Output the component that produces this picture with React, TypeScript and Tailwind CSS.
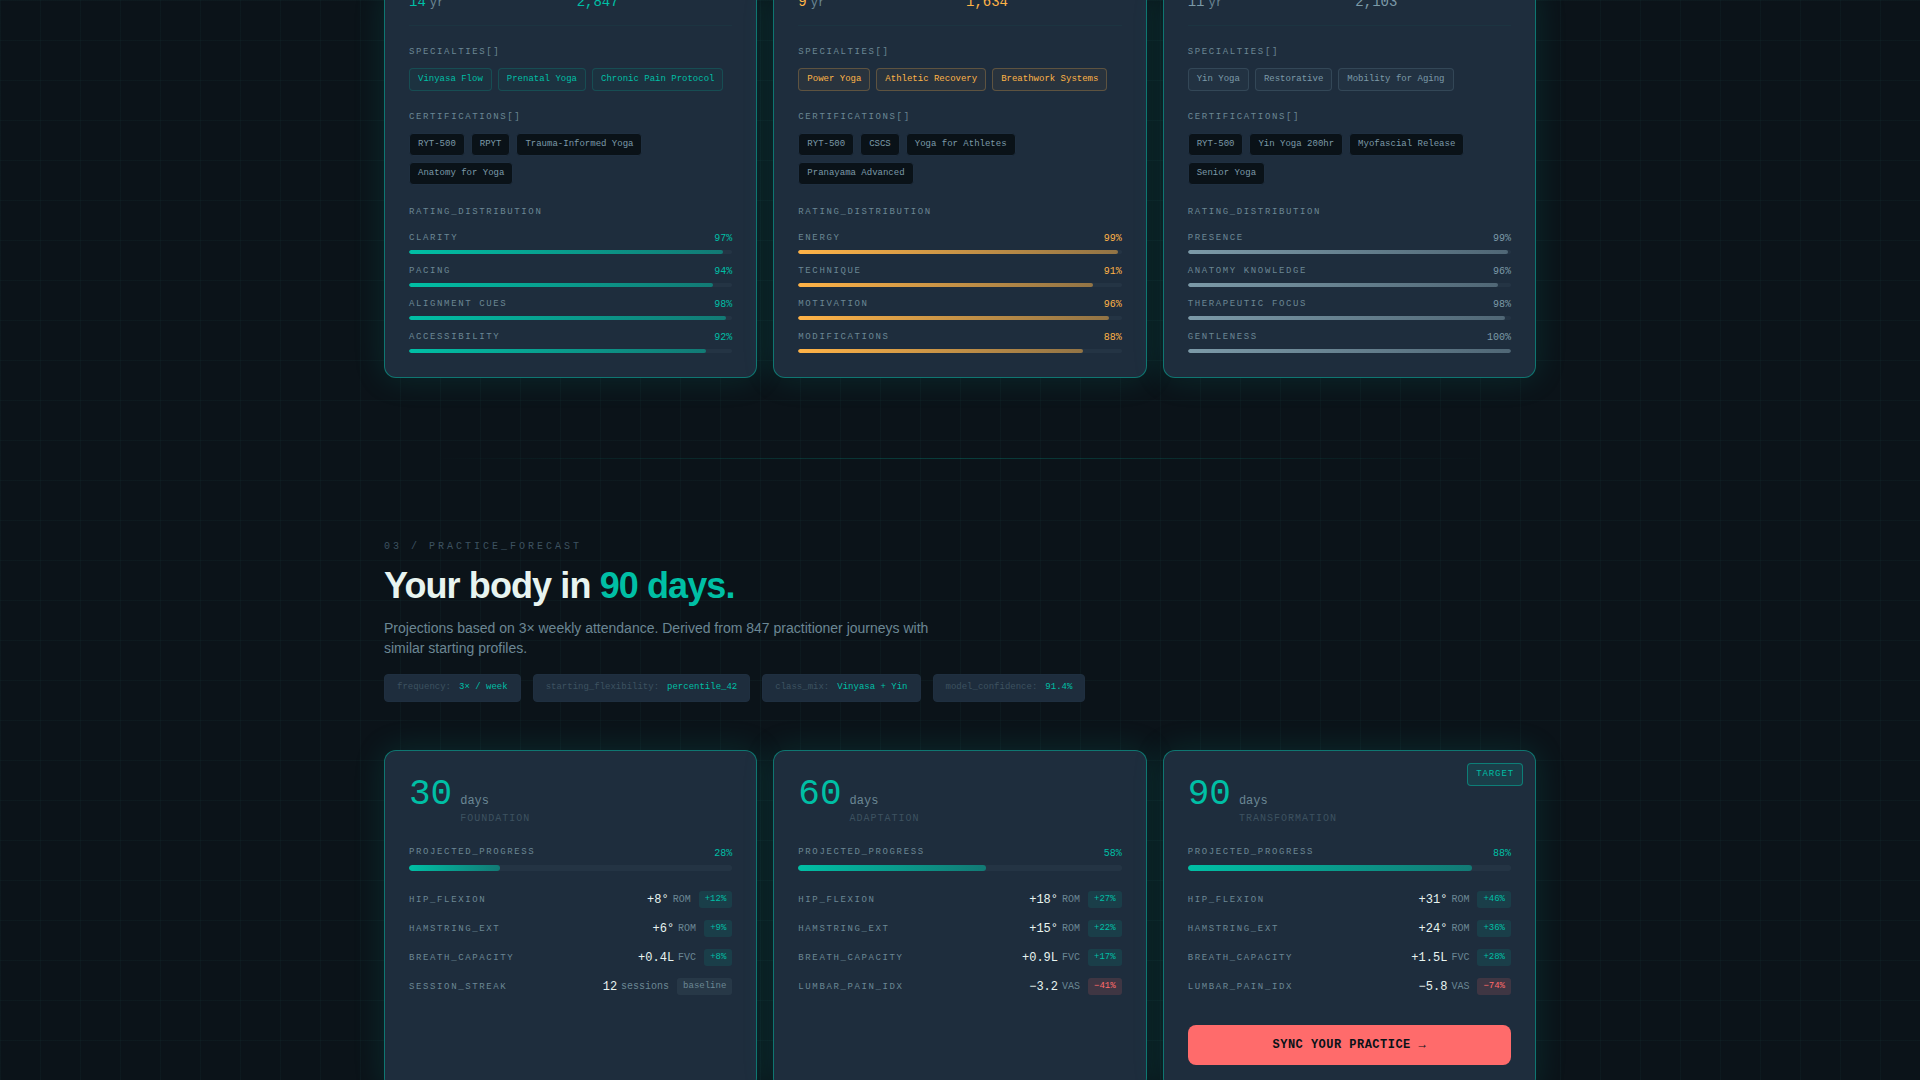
import clsx from "clsx";

type Tone = "teal" | "amber" | "slate";

type Instructor = {
  tone: Tone;
  years: number;
  sessions: string;
  specialties: string[];
  certifications: string[];
  ratings: [string, number][];
};

type Metric = {
  name: string;
  value: string;
  unit: string;
  delta: string;
  kind: "up" | "down" | "flat";
};

type Forecast = {
  days: number;
  phase: string;
  progress: number;
  metrics: Metric[];
  target?: boolean;
};

const textTone = {
  teal: "text-[#00bfa5]",
  amber: "text-[#ffb347]",
  slate: "text-[#7c9aa8]",
};

const tagTone = {
  teal: "border-[#00bfa5]/20 bg-[#00bfa5]/4 text-[#00bfa5]",
  amber: "border-[#ffb347]/25 bg-[#ffb347]/5 text-[#ffb347]",
  slate: "border-[#7c9aa8]/20 bg-[#7c9aa8]/5 text-[#7c9aa8]",
};

const barTone = {
  teal: "from-[#00bfa5] to-[#00bfa5]/50",
  amber: "from-[#ffb347] to-[#ffb347]/50",
  slate: "from-[#7c9aa8] to-[#7c9aa8]/50",
};

const deltaTone = {
  up: "bg-[#00bfa5]/12 text-[#00bfa5]",
  down: "bg-[#ff6b6b]/15 text-[#ff6b6b]",
  flat: "bg-[#7c9aa8]/10 text-[#6b8794]",
};

const instructors: Instructor[] = [
  {
    tone: "teal",
    years: 14,
    sessions: "2,847",
    specialties: ["Vinyasa Flow", "Prenatal Yoga", "Chronic Pain Protocol"],
    certifications: ["RYT-500", "RPYT", "Trauma-Informed Yoga", "Anatomy for Yoga"],
    ratings: [
      ["CLARITY", 97],
      ["PACING", 94],
      ["ALIGNMENT CUES", 98],
      ["ACCESSIBILITY", 92],
    ],
  },
  {
    tone: "amber",
    years: 9,
    sessions: "1,634",
    specialties: ["Power Yoga", "Athletic Recovery", "Breathwork Systems"],
    certifications: ["RYT-500", "CSCS", "Yoga for Athletes", "Pranayama Advanced"],
    ratings: [
      ["ENERGY", 99],
      ["TECHNIQUE", 91],
      ["MOTIVATION", 96],
      ["MODIFICATIONS", 88],
    ],
  },
  {
    tone: "slate",
    years: 11,
    sessions: "2,103",
    specialties: ["Yin Yoga", "Restorative", "Mobility for Aging"],
    certifications: ["RYT-500", "Yin Yoga 200hr", "Myofascial Release", "Senior Yoga"],
    ratings: [
      ["PRESENCE", 99],
      ["ANATOMY KNOWLEDGE", 96],
      ["THERAPEUTIC FOCUS", 98],
      ["GENTLENESS", 100],
    ],
  },
];

const params = [
  ["frequency:", "3× / week"],
  ["starting_flexibility:", "percentile_42"],
  ["class_mix:", "Vinyasa + Yin"],
  ["model_confidence:", "91.4%"],
];

const forecasts: Forecast[] = [
  {
    days: 30,
    phase: "FOUNDATION",
    progress: 28,
    metrics: [
      { name: "HIP_FLEXION", value: "+8°", unit: "ROM", delta: "+12%", kind: "up" },
      { name: "HAMSTRING_EXT", value: "+6°", unit: "ROM", delta: "+9%", kind: "up" },
      { name: "BREATH_CAPACITY", value: "+0.4L", unit: "FVC", delta: "+8%", kind: "up" },
      { name: "SESSION_STREAK", value: "12", unit: "sessions", delta: "baseline", kind: "flat" },
    ],
  },
  {
    days: 60,
    phase: "ADAPTATION",
    progress: 58,
    metrics: [
      { name: "HIP_FLEXION", value: "+18°", unit: "ROM", delta: "+27%", kind: "up" },
      { name: "HAMSTRING_EXT", value: "+15°", unit: "ROM", delta: "+22%", kind: "up" },
      { name: "BREATH_CAPACITY", value: "+0.9L", unit: "FVC", delta: "+17%", kind: "up" },
      { name: "LUMBAR_PAIN_IDX", value: "−3.2", unit: "VAS", delta: "−41%", kind: "down" },
    ],
  },
  {
    days: 90,
    phase: "TRANSFORMATION",
    progress: 88,
    target: true,
    metrics: [
      { name: "HIP_FLEXION", value: "+31°", unit: "ROM", delta: "+46%", kind: "up" },
      { name: "HAMSTRING_EXT", value: "+24°", unit: "ROM", delta: "+36%", kind: "up" },
      { name: "BREATH_CAPACITY", value: "+1.5L", unit: "FVC", delta: "+28%", kind: "up" },
      { name: "LUMBAR_PAIN_IDX", value: "−5.8", unit: "VAS", delta: "−74%", kind: "down" },
    ],
  },
];

const cardClass =
  "border-[#00bfa5]/50 bg-[#1e2d3d] shadow-[0_0_32px_rgba(0,191,165,0.15)]";

const Label = ({ children }: { children: string }) => (
  <h4 className="text-[9px] leading-[14px] tracking-[0.18em] text-[#6b8794]">
    {children}
  </h4>
);

const Bar = ({ value, tone, thick }: { value: number; tone: Tone; thick?: boolean }) => (
  <div
    className={clsx(
      "rounded-full bg-[#7c9aa8]/7 overflow-hidden",
      thick ? "h-1.5" : "h-1"
    )}
  >
    <div
      className={clsx("h-full rounded-full bg-linear-to-r", barTone[tone])}
      style={{ width: `${value}%` }}
    />
  </div>
);

const InstructorCard = ({ data }: { data: Instructor }) => (
  <article className={clsx("rounded-b-xl border border-t-0 px-6 pb-6", cardClass)}>
    {/* stats */}
    <div className="grid grid-cols-2 gap-3 border-b border-[#00bfa5]/5 pb-[13px] text-sm">
      <p className={textTone[data.tone]}>
        {data.years}
        <span className="ml-1 text-xs text-[#6b8794]">yr</span>
      </p>
      <p className={textTone[data.tone]}>{data.sessions}</p>
    </div>

    <div className="mt-[19px]">
      <Label>SPECIALTIES[]</Label>
      <ul className="mt-[9px] flex flex-wrap gap-1.5">
        {data.specialties.map((item) => (
          <li
            key={item}
            className={clsx(
              "rounded-sm border px-2 pt-[3px] pb-1 text-[9px] leading-[14px]",
              tagTone[data.tone]
            )}
          >
            {item}
          </li>
        ))}
      </ul>
    </div>

    <div className="mt-[19px]">
      <Label>CERTIFICATIONS[]</Label>
      <ul className="mt-[9px] flex flex-wrap gap-1.5">
        {data.certifications.map((item) => (
          <li
            key={item}
            className="rounded-sm border border-[#1f2f40] bg-[#0a1218] px-2 pt-[3px] pb-1 text-[9px] leading-[14px] text-[#7c9aa8]"
          >
            {item}
          </li>
        ))}
      </ul>
    </div>

    {/* ratings */}
    <div className="mt-5">
      <Label>RATING_DISTRIBUTION</Label>
      <div className="mt-3 flex flex-col gap-2.5">
        {data.ratings.map(([name, value]) => (
          <div key={name}>
            <div className="mb-[3px] flex justify-between">
              <Label>{name}</Label>
              <span className={clsx("text-[10px] leading-4", textTone[data.tone])}>
                {value}%
              </span>
            </div>
            <Bar value={value} tone={data.tone} />
          </div>
        ))}
      </div>
    </div>
  </article>
);

const ForecastCard = ({ data }: { data: Forecast }) => (
  <article className={clsx("relative rounded-xl border p-6", cardClass)}>
    {data.target && (
      <span className="absolute top-3 right-3 rounded-sm border border-[#00bfa5]/50 bg-[#00bfa5]/12 px-2 pt-[3px] pb-1 text-[9px] leading-[14px] tracking-widest text-[#00bfa5]">
        TARGET
      </span>
    )}

    <div className="flex items-baseline gap-2">
      <span className="text-4xl leading-10 text-[#00bfa5]">{data.days}</span>
      <div>
        <p className="text-xs leading-[18px] text-[#6b8794]">days</p>
        <p className="mt-px text-[10px] leading-4 tracking-widest text-[#3d5260]">
          {data.phase}
        </p>
      </div>
    </div>

    {/* progress */}
    <div className="mt-[18px]">
      <div className="mb-0.5 flex justify-between">
        <Label>PROJECTED_PROGRESS</Label>
        <span className="text-[10px] leading-[18px] text-[#00bfa5]">{data.progress}%</span>
      </div>
      <Bar value={data.progress} tone="teal" thick />
    </div>

    <dl className="mt-5 flex flex-col gap-3">
      {data.metrics.map((metric) => (
        <div key={metric.name} className="flex items-center justify-between">
          <dt className="text-[9px] leading-[14px] tracking-[0.18em] text-[#6b8794]">
            {metric.name}
          </dt>
          <dd className="flex items-center">
            <span className="text-xs leading-4 text-[#e8f4f0]">{metric.value}</span>
            <span className="ml-1 text-[10px] leading-4 text-[#6b8794]">
              {metric.unit}
            </span>
            <span
              className={clsx(
                "ml-2 rounded-[3px] px-1.5 pt-px pb-0.5 text-[9px] leading-[14px]",
                deltaTone[metric.kind]
              )}
            >
              {metric.delta}
            </span>
          </dd>
        </div>
      ))}
    </dl>

    {data.target && (
      <button
        type="button"
        className="mt-[30px] h-10 w-full rounded-lg bg-[#ff6b6b] text-xs font-bold tracking-[0.04em] text-[#0a1218]"
      >
        SYNC YOUR PRACTICE →
      </button>
    )}
  </article>
);

export default function App() {
  return (
    <div className="h-screen overflow-hidden bg-[#0b1319] bg-[linear-gradient(rgba(60,191,175,0.04)_1px,transparent_1px),linear-gradient(90deg,rgba(60,191,175,0.04)_1px,transparent_1px)] bg-size-[40px_40px] font-['Liberation_Mono',monospace]">
      <main className="mx-auto max-w-[1200px] px-6">
        <section className="-mt-2 grid grid-cols-3 gap-4 pb-20">
          {instructors.map((item) => (
            <InstructorCard key={item.sessions} data={item} />
          ))}
        </section>

        <div className="mx-12 h-px bg-linear-to-r from-transparent via-[#00bfa5]/25 to-transparent" />

        <section className="pt-20">
          <p className="text-[10px] leading-4 tracking-[0.3em] text-[#3d5260]">
            03 / PRACTICE_FORECAST
          </p>
          <h2 className="mt-[11px] font-['Liberation_Sans',sans-serif] text-4xl font-bold tracking-tight text-[#e8f4f0]">
            Your body in <span className="text-[#00bfa5]">90 days.</span>
          </h2>
          <p className="mt-3 max-w-[560px] font-['Liberation_Sans',sans-serif] text-sm text-[#6b8794]">
            Projections based on 3× weekly attendance. Derived from 847 practitioner
            journeys with similar starting profiles.
          </p>

          <ul className="mt-4 flex flex-wrap gap-3">
            {params.map(([key, value]) => (
              <li
                key={key}
                className="flex gap-2 rounded-sm border border-[#1f2f40] bg-[#1e2d3d] px-3 pt-[5px] pb-[7px] text-[9px] leading-[14px]"
              >
                <span className="text-[#3d5260]">{key}</span>
                <span className="text-[#00bfa5]">{value}</span>
              </li>
            ))}
          </ul>

          <div className="mt-12 grid grid-cols-3 gap-4">
            {forecasts.map((item) => (
              <ForecastCard key={item.days} data={item} />
            ))}
          </div>
        </section>
      </main>
    </div>
  );
}
